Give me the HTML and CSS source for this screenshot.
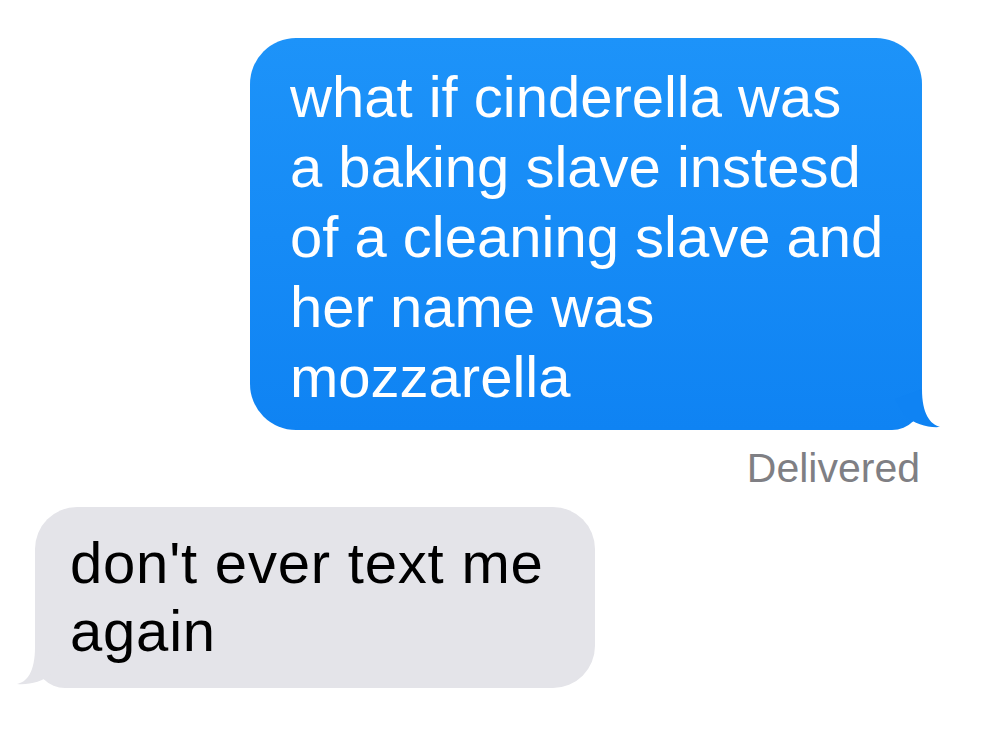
FILE: index.html
```html
<!DOCTYPE html>
<html lang="en">
<head>
    <meta charset="UTF-8">
    <meta name="viewport" content="width=device-width, initial-scale=1.0">
    <title>Messages</title>
    <link rel="stylesheet" href="styles.css">
</head>
<body>
    <div class="thread">
        <div class="bubble sent">
            what if cinderella was<br>
            a baking slave instesd<br>
            of a cleaning slave and<br>
            her name was<br>
            mozzarella
            <svg class="tail tail-sent" viewBox="0 0 50 45" width="50" height="45">
                <path d="M30 3 C30 28 38 38 48 41 C36 42 23 38 13 30 L3 13 Z"/>
            </svg>
        </div>
        <div class="status">Delivered</div>
        <div class="bubble received">
            don't ever text me<br>
            again
            <svg class="tail tail-received" viewBox="0 0 50 45" width="50" height="45">
                <path d="M20 3 C20 28 12 38 2 40 C14 41 27 38 37 30 L47 13 Z"/>
            </svg>
        </div>
    </div>
</body>
</html>
```

FILE: styles.css
```css
body {
    margin: 0;
    background-color: #ffffff;
    font-family: "Liberation Sans", Arial, sans-serif;
}

.thread {
    display: flex;
    flex-direction: column;
    align-items: flex-start;
}

.bubble {
    position: relative;
    box-sizing: border-box;
    font-size: 58px;
    white-space: nowrap;
}

.sent {
    margin-top: 38px;
    margin-left: 250px;
    width: 672px;
    padding: 24px 30px 18px 40px;
    line-height: 70px;
    color: white;
    background: linear-gradient(#1d93f9, #0f83f3);
    border-radius: 46px 46px 30px 46px;
}

.received {
    margin-top: 15px;
    margin-left: 35px;
    width: 560px;
    padding: 22px 35px 23px;
    line-height: 68px;
    letter-spacing: 0.8px;
    color: #000;
    background-color: #e4e4e9;
    border-radius: 42px 42px 42px 30px;
}

.tail {
    position: absolute;
    bottom: -1px;
}

.tail-sent {
    right: -20px;
    fill: #0f83f3;
}

.tail-received {
    left: -20px;
    fill: #e4e4e9;
}

.status {
    align-self: flex-end;
    margin: 14px 80px 0 0;
    font-size: 41px;
    line-height: 48px;
    color: #7f7f84;
}
```
